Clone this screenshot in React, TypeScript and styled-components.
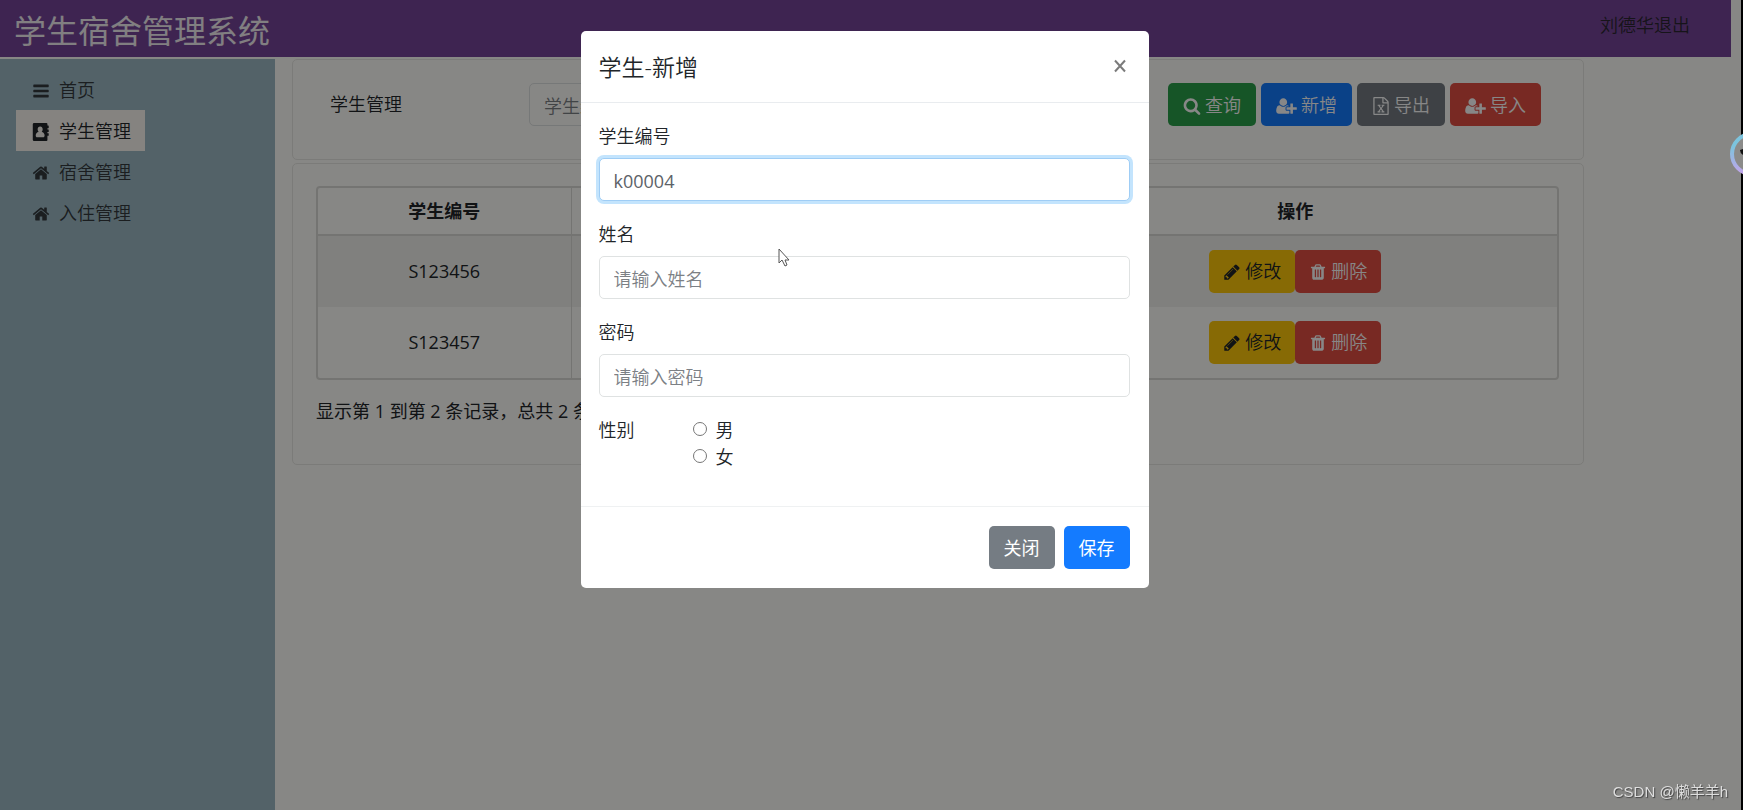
import React, { useState } from 'react';
import styled, { createGlobalStyle, css } from 'styled-components';

const GlobalStyle = createGlobalStyle`
  *, *::before, *::after { box-sizing: border-box; }
  body {
    margin: 0;
    background: #fffffb;
    color: #212529;
    font: 350 18px/27px "Open Sans", "Noto Sans CJK SC", sans-serif;
  }
  button, input { font: inherit; }
`;

const ICONS = {
  bars: 'M1664 1344v128q0 26-19 45t-45 19h-1408q-26 0-45-19t-19-45v-128q0-26 19-45t45-19h1408q26 0 45 19t19 45zm0-512v128q0 26-19 45t-45 19h-1408q-26 0-45-19t-19-45v-128q0-26 19-45t45-19h1408q26 0 45 19t19 45zm0-512v128q0 26-19 45t-45 19h-1408q-26 0-45-19t-19-45v-128q0-26 19-45t45-19h1408q26 0 45 19t19 45z',
  book: 'M210 0H1440Q1536 0 1536 96V256H1632Q1664 256 1664 288V480Q1664 512 1632 512H1536V640H1632Q1664 640 1664 672V864Q1664 896 1632 896H1536V1024H1632Q1664 1024 1664 1056V1248Q1664 1280 1632 1280H1536V1696Q1536 1792 1440 1792H210Q78 1792 78 1660V132Q78 0 210 0ZM812 350C660 350 560 480 560 630C560 740 600 830 660 885C470 900 370 1040 370 1270C370 1360 430 1420 510 1420H1114C1194 1420 1254 1360 1254 1270C1254 1040 1154 900 964 885C1024 830 1064 740 1064 630C1064 480 964 350 812 350Z',
  home: 'M1472 992v480q0 26-19 45t-45 19h-384v-384h-256v384h-384q-26 0-45-19t-19-45v-480q0-1 .5-3t.5-3l575-474 575 474q1 2 1 6zm223-69l-62 74q-8 9-21 11h-3q-13 0-21-7l-692-577-692 577q-12 8-24 7-13-2-21-11l-62-74q-8-10-7-23.5t11-21.5l719-599q32-26 76-26t76 26l244 204v-195q0-14 9-23t23-9h192q14 0 23 9t9 23v408l219 182q10 8 11 21.5t-7 23.5z',
  search: 'M1216 832q0-185-131.500-316.500t-316.500-131.500-316.500 131.500-131.500 316.500 131.500 316.500 316.500 131.500 316.500-131.500 131.500-316.500zm512 832q0 52-38 90t-90 38q-54 0-90-38l-343-342q-179 124-399 124-143 0-273.500-55.500t-225-150-150-225-55.500-273.500 55.500-273.500 150-225 225-150 273.500-55.500 273.500 55.500 225 150 150 225 55.500 273.500q0 220-124 399l343 343q37 37 37 90z',
  trash: 'M704 1376v-704q0-14-9-23t-23-9h-64q-14 0-23 9t-9 23v704q0 14 9 23t23 9h64q14 0 23-9t9-23zm256 0v-704q0-14-9-23t-23-9h-64q-14 0-23 9t-9 23v704q0 14 9 23t23 9h64q14 0 23-9t9-23zm256 0v-704q0-14-9-23t-23-9h-64q-14 0-23 9t-9 23v704q0 14 9 23t23 9h64q14 0 23-9t9-23zm-544-992h448l-48-117q-7-9-17-11h-317q-10 2-17 11zm928 32v64q0 14-9 23t-23 9h-96v948q0 83-47 143.500t-113 60.500h-832q-66 0-113-58.500t-47-141.500v-952h-96q-14 0-23-9t-9-23v-64q0-14 9-23t23-9h309l70-167q15-37 54-63t79-26h320q40 0 79 26t54 63l70 167h309q14 0 23 9t9 23z',
  pencil: 'M491 1536l91-91-235-235-91 91v107h128v128h107zm523-928q0-22-22-22-10 0-17 7l-542 542q-7 7-7 17 0 22 22 22 10 0 17-7l542-542q7-7 7-17zm-54-192l416 416-832 832h-416v-416zm683 96q0 53-37 90l-166 166-416-416 166-165q36-38 90-38 53 0 91 38l235 234q37 39 37 91z',
  userPlus: 'M704 896q-159 0-271.500-112.500t-112.500-271.500 112.500-271.500 271.500-112.500 271.500 112.500 112.500 271.500-112.500 271.500-271.500 112.500zm960 128h352q13 0 22.500 9.500t9.500 22.500v192q0 13-9.500 22.500t-22.500 9.500h-352v352q0 13-9.500 22.500t-22.500 9.500h-192q-13 0-22.500-9.500t-9.500-22.500v-352h-352q-13 0-22.500-9.500t-9.500-22.500v-192q0-13 9.500-22.500t22.500-9.500h352v-352q0-13 9.500-22.500t22.500-9.500h192q13 0 22.500 9.500t9.500 22.500v352zm-736 224q0 52 38 90t90 38h256v238q-68 50-171 50h-874q-121 0-194-69t-73-190q0-53 3.500-103.500t14-109 26.500-108.500 43-97.500 62-81 85.500-53.500 111.500-20q19 0 39 17 79 61 154.500 91.500t164.500 30.500 164.500-30.500 154.500-91.500q20-17 39-17 132 0 217 96h-223q-52 0-90 38t-38 90v192z',
  excel: 'M1596 380q28 28 48 76t20 88v1152q0 40-28 68t-68 28h-1344q-40 0-68-28t-28-68v-1600q0-40 28-68t68-28h896q40 0 88 20t76 48zm-444-244v376h376q-10-29-22-41l-313-313q-12-12-41-22zm384 1528v-1024h-416q-40 0-68-28t-28-68v-416h-768v1536h1280zm-979-234v106h281v-106h-75l103-161q5-7 10-16.500t7.500-13.500 3.500-4h2q1 4 5 10 2 4 4.500 7.500t6 8 6.500 8.500l107 161h-76v106h291v-106h-68l-192-273 195-282h67v-107h-279v107h74l-103 159q-4 7-10 16.500t-9 13.500l-2 3h-2q-1-4-5-10-6-11-17-23l-106-159h76v-107h-290v107h68l189 272-194 283h-68z',
};
type IconName = keyof typeof ICONS;

const Glyph = styled.svg<{ $w: number }>`
  width: ${(p) => p.$w}px;
  height: 18px;
  flex: none;
  fill: currentColor;
`;

function Icon({ name }: { name: IconName }) {
  const wide = name === 'userPlus';
  return (
    <Glyph $w={wide ? 21 : 18} viewBox={wide ? '0 0 2048 1792' : '0 0 1792 1792'} fillRule="evenodd" aria-hidden="true">
      <path d={ICONS[name]} />
    </Glyph>
  );
}

const Page = styled.div`
  min-height: 100vh;
  display: flex;
  flex-direction: column;
  border-right: 2px solid #000;
`;

const Header = styled.header`
  display: flex;
  justify-content: space-between;
  align-items: flex-start;
  height: 57px;
  margin: 0 10px 2px 0;
  padding: 0 41px 0 14px;
  background: #76459a;
`;

const Brand = styled.h1`
  margin: 0;
  color: #f4f0f4;
  font-size: 32px;
  line-height: 62px;
  font-weight: 400;
`;

const Account = styled.a`
  padding-top: 12px;
  color: #2a2630;
  text-decoration: none;
`;

const Body = styled.div`
  flex: 1;
  display: flex;
`;

const Sidebar = styled.nav`
  flex: none;
  width: 275px;
  padding: 10px 16px;
  background: #9db9c5;
`;

const NavList = styled.ul`
  margin: 0;
  padding: 0;
  list-style: none;
`;

const NavLink = styled.a<{ $active?: boolean }>`
  display: flex;
  width: fit-content;
  align-items: center;
  gap: 9px;
  height: 41px;
  padding: 2px 14px 0 16px;
  color: #33393d;
  text-decoration: none;
  ${(p) => p.$active && css`background: #fbf8f2; color: #212529;`}
`;

const Content = styled.main`
  flex: 1;
  min-width: 0;
  padding: 0 157px 0 17px;
`;

const Card = styled.section`
  border: 1px solid #e9e9e4;
  border-radius: 5px;
  margin-bottom: 3px;
  padding: 22px 24px 22px 23px;
`;

const SearchRow = styled.form`
  display: grid;
  grid-template-columns: 199px 260px 1fr;
  align-items: start;
  height: 55px;
  padding: 1px 18px 0 14px;
`;

const SearchTitle = styled.label`
  line-height: 43px;
`;

const Tools = styled.div`
  display: flex;
  justify-content: flex-end;
  gap: 5px;
`;

const TONES = {
  green: ['#2ba04b', '#ffffff'],
  blue: ['#147bff', '#ffffff'],
  gray: ['#757c83', '#ffffff'],
  red: ['#e34e43', '#ffffff'],
  yellow: ['#ffc90a', '#212529'],
} as const;

const Button = styled.button<{ $tone: keyof typeof TONES }>`
  display: inline-flex;
  align-items: center;
  justify-content: center;
  gap: 4px;
  height: 43px;
  padding: 2px 15px 0;
  border: 0;
  border-radius: 5px;
  white-space: nowrap;
  font-weight: 350;
  background: ${(p) => TONES[p.$tone][0]};
  color: ${(p) => TONES[p.$tone][1]};
`;

const RowButton = styled(Button)`
  padding: 0 14px;
`;

const ModalButton = styled(Button)`
  font-weight: 400;
`;

const TextInput = styled.input`
  display: block;
  width: 100%;
  height: 43px;
  padding: 2px 14px 0;
  border: 1px solid #dfe2e2;
  border-radius: 5px;
  background: transparent;
  color: #5c6268;
  outline: 0;
  font-weight: 400;
  &::placeholder { color: #7c8085; opacity: 1; font-weight: 350; }
`;

const ModalInput = styled(TextInput)`
  background: #fff;
  &:focus {
    border-color: #9fcdf5;
    box-shadow: 0 0 0 3px #c3e4fd;
  }
`;

const TableFrame = styled.div`
  border: 2px solid #dcdcd8;
  border-radius: 4px;
`;

const Table = styled.table`
  width: 100%;
  table-layout: fixed;
  border-collapse: collapse;
  text-align: center;
  th, td { padding: 0; }
  th { height: 47px; border-bottom: 2px solid #dcdcd8; font-weight: 700; }
  td { height: 72px; font-weight: 400; }
  th + th, td + td { border-left: 1px solid #dcdcd8; }
  tbody tr:nth-child(odd) { background: #f2f2ee; }
  tbody tr:last-child td { height: 71px; }
`;

const Actions = styled.div`
  display: flex;
  justify-content: center;
`;

const Summary = styled.p`
  margin: 18px 0 17px;
  font-weight: 400;
`;

const Backdrop = styled.div`
  position: fixed;
  inset: 0 2px 0 0;
  display: flex;
  justify-content: center;
  align-items: flex-start;
  padding: 31px 12px 31px 0;
  background: rgba(0, 0, 0, 0.47);
`;

const Modal = styled.div`
  width: 568px;
  border-radius: 5px;
  background: #fff;
`;

const ModalHeader = styled.div`
  display: flex;
  justify-content: space-between;
  align-items: flex-start;
  height: 72px;
  padding: 19px 18px;
  border-bottom: 1px solid #e9ecef;
`;

const ModalTitle = styled.h2`
  margin: 0;
  font-size: 23px;
  line-height: 35px;
  font-weight: 350;
`;

const Close = styled.button`
  padding: 0 5px;
  border: 0;
  background: none;
  color: #7b7b7b;
  line-height: 0;
  svg { width: 12px; height: 32px; fill: none; stroke: currentColor; stroke-width: 2; }
`;

const ModalBody = styled.div`
  padding: 20px 19px 35px 18px;
`;

const Field = styled.div`
  display: grid;
  gap: 8px;
  margin-bottom: 20px;
`;

const Gender = styled.fieldset`
  display: flex;
  margin: 0;
  padding: 0;
  border: 0;
`;

const GenderTitle = styled.span`
  width: 94px;
`;

const Choice = styled.label`
  display: flex;
  align-items: center;
  gap: 9px;
  input { width: 14px; height: 14px; margin: 0 0 4px; }
`;

const ModalFooter = styled.div`
  display: flex;
  justify-content: flex-end;
  gap: 9px;
  padding: 19px;
  border-top: 1px solid #eff1f2;
`;

const Pointer = styled.svg`
  position: fixed;
  left: 778px;
  top: 248px;
  width: 12px;
  height: 19px;
`;

const FloatingBall = styled.svg`
  position: fixed;
  right: 0;
  top: 132px;
  width: 13px;
  height: 44px;
`;

const Watermark = styled.div`
  position: fixed;
  right: 15px;
  bottom: 6px;
  color: #dedede;
  font: 15px/24px "Liberation Sans", "Noto Sans CJK SC", sans-serif;
  text-shadow: 1px 1px 1px #444;
`;

const NAV: { label: string; icon: IconName; active?: boolean }[] = [
  { label: '首页', icon: 'bars' },
  { label: '学生管理', icon: 'book', active: true },
  { label: '宿舍管理', icon: 'home' },
  { label: '入住管理', icon: 'home' },
];

const STUDENTS = ['S123456', 'S123457'];

export default function App() {
  const [code, setCode] = useState('k00004');
  return (
    <>
      <GlobalStyle />
      <Page>
        <Header>
          <Brand>学生宿舍管理系统</Brand>
          <Account href="#logout">刘德华退出</Account>
        </Header>
        <Body>
          <Sidebar>
            <NavList>
              {NAV.map((n) => (
                <li key={n.label}>
                  <NavLink href="#" $active={n.active}>
                    <Icon name={n.icon} />
                    {n.label}
                  </NavLink>
                </li>
              ))}
            </NavList>
          </Sidebar>
          <Content>
            <Card>
              <SearchRow>
                <SearchTitle htmlFor="query">学生管理</SearchTitle>
                <TextInput id="query" placeholder="学生编号" />
                <Tools>
                  <Button type="button" $tone="green"><Icon name="search" />查询</Button>
                  <Button type="button" $tone="blue"><Icon name="userPlus" />新增</Button>
                  <Button type="button" $tone="gray"><Icon name="excel" />导出</Button>
                  <Button type="button" $tone="red"><Icon name="userPlus" />导入</Button>
                </Tools>
              </SearchRow>
            </Card>
            <Card>
              <TableFrame>
                <Table>
                  <colgroup>
                    <col width="253" />
                    <col />
                    <col width="524" />
                  </colgroup>
                  <thead>
                    <tr><th>学生编号</th><th /><th>操作</th></tr>
                  </thead>
                  <tbody>
                    {STUDENTS.map((id) => (
                      <tr key={id}>
                        <td>{id}</td>
                        <td />
                        <td>
                          <Actions>
                            <RowButton type="button" $tone="yellow"><Icon name="pencil" />修改</RowButton>
                            <RowButton type="button" $tone="red"><Icon name="trash" />删除</RowButton>
                          </Actions>
                        </td>
                      </tr>
                    ))}
                  </tbody>
                </Table>
              </TableFrame>
              <Summary>显示第 1 到第 2 条记录，总共 2 条记录</Summary>
            </Card>
          </Content>
        </Body>
      </Page>
      <Backdrop>
        <Modal role="dialog" aria-modal="true" aria-labelledby="dialog-title">
          <ModalHeader>
            <ModalTitle id="dialog-title">学生-新增</ModalTitle>
            <Close type="button" aria-label="关闭">
              <svg viewBox="0 0 12 32"><path d="M1 10.500 11 21.500M11 10.500 1 21.500" /></svg>
            </Close>
          </ModalHeader>
          <ModalBody>
            <Field>
              <label htmlFor="code">学生编号</label>
              <ModalInput id="code" autoFocus value={code} onChange={(e) => setCode(e.target.value)} />
            </Field>
            <Field>
              <label htmlFor="name">姓名</label>
              <ModalInput id="name" placeholder="请输入姓名" />
            </Field>
            <Field>
              <label htmlFor="password">密码</label>
              <ModalInput id="password" type="password" placeholder="请输入密码" />
            </Field>
            <Gender aria-labelledby="gender">
              <GenderTitle id="gender">性别</GenderTitle>
              <div>
                <Choice><input type="radio" name="gender" />男</Choice>
                <Choice><input type="radio" name="gender" />女</Choice>
              </div>
            </Gender>
          </ModalBody>
          <ModalFooter>
            <ModalButton type="button" $tone="gray">关闭</ModalButton>
            <ModalButton type="button" $tone="blue">保存</ModalButton>
          </ModalFooter>
        </Modal>
      </Backdrop>
      <Pointer viewBox="0 0 12 19" aria-hidden="true">
        <path d="M1 1v14l3-3 3 6 2-1-2-5h4z" fill="#fff" stroke="#555" />
      </Pointer>
      <FloatingBall viewBox="0 0 13 44" aria-hidden="true">
        <defs>
          <linearGradient id="ring" x1="0" y1="0" x2="0" y2="1">
            <stop offset="0.3" stopColor="#7cc4de" />
            <stop offset="1" stopColor="#c3a4ea" />
          </linearGradient>
        </defs>
        <circle cx="22" cy="22" r="20" fill="#8b8b8a" stroke="url(#ring)" strokeWidth="4" />
        <path d="M10 18l3-1v6q-3-2-3-5z" fill="#111" />
      </FloatingBall>
      <Watermark>CSDN @懒羊羊h</Watermark>
    </>
  );
}
